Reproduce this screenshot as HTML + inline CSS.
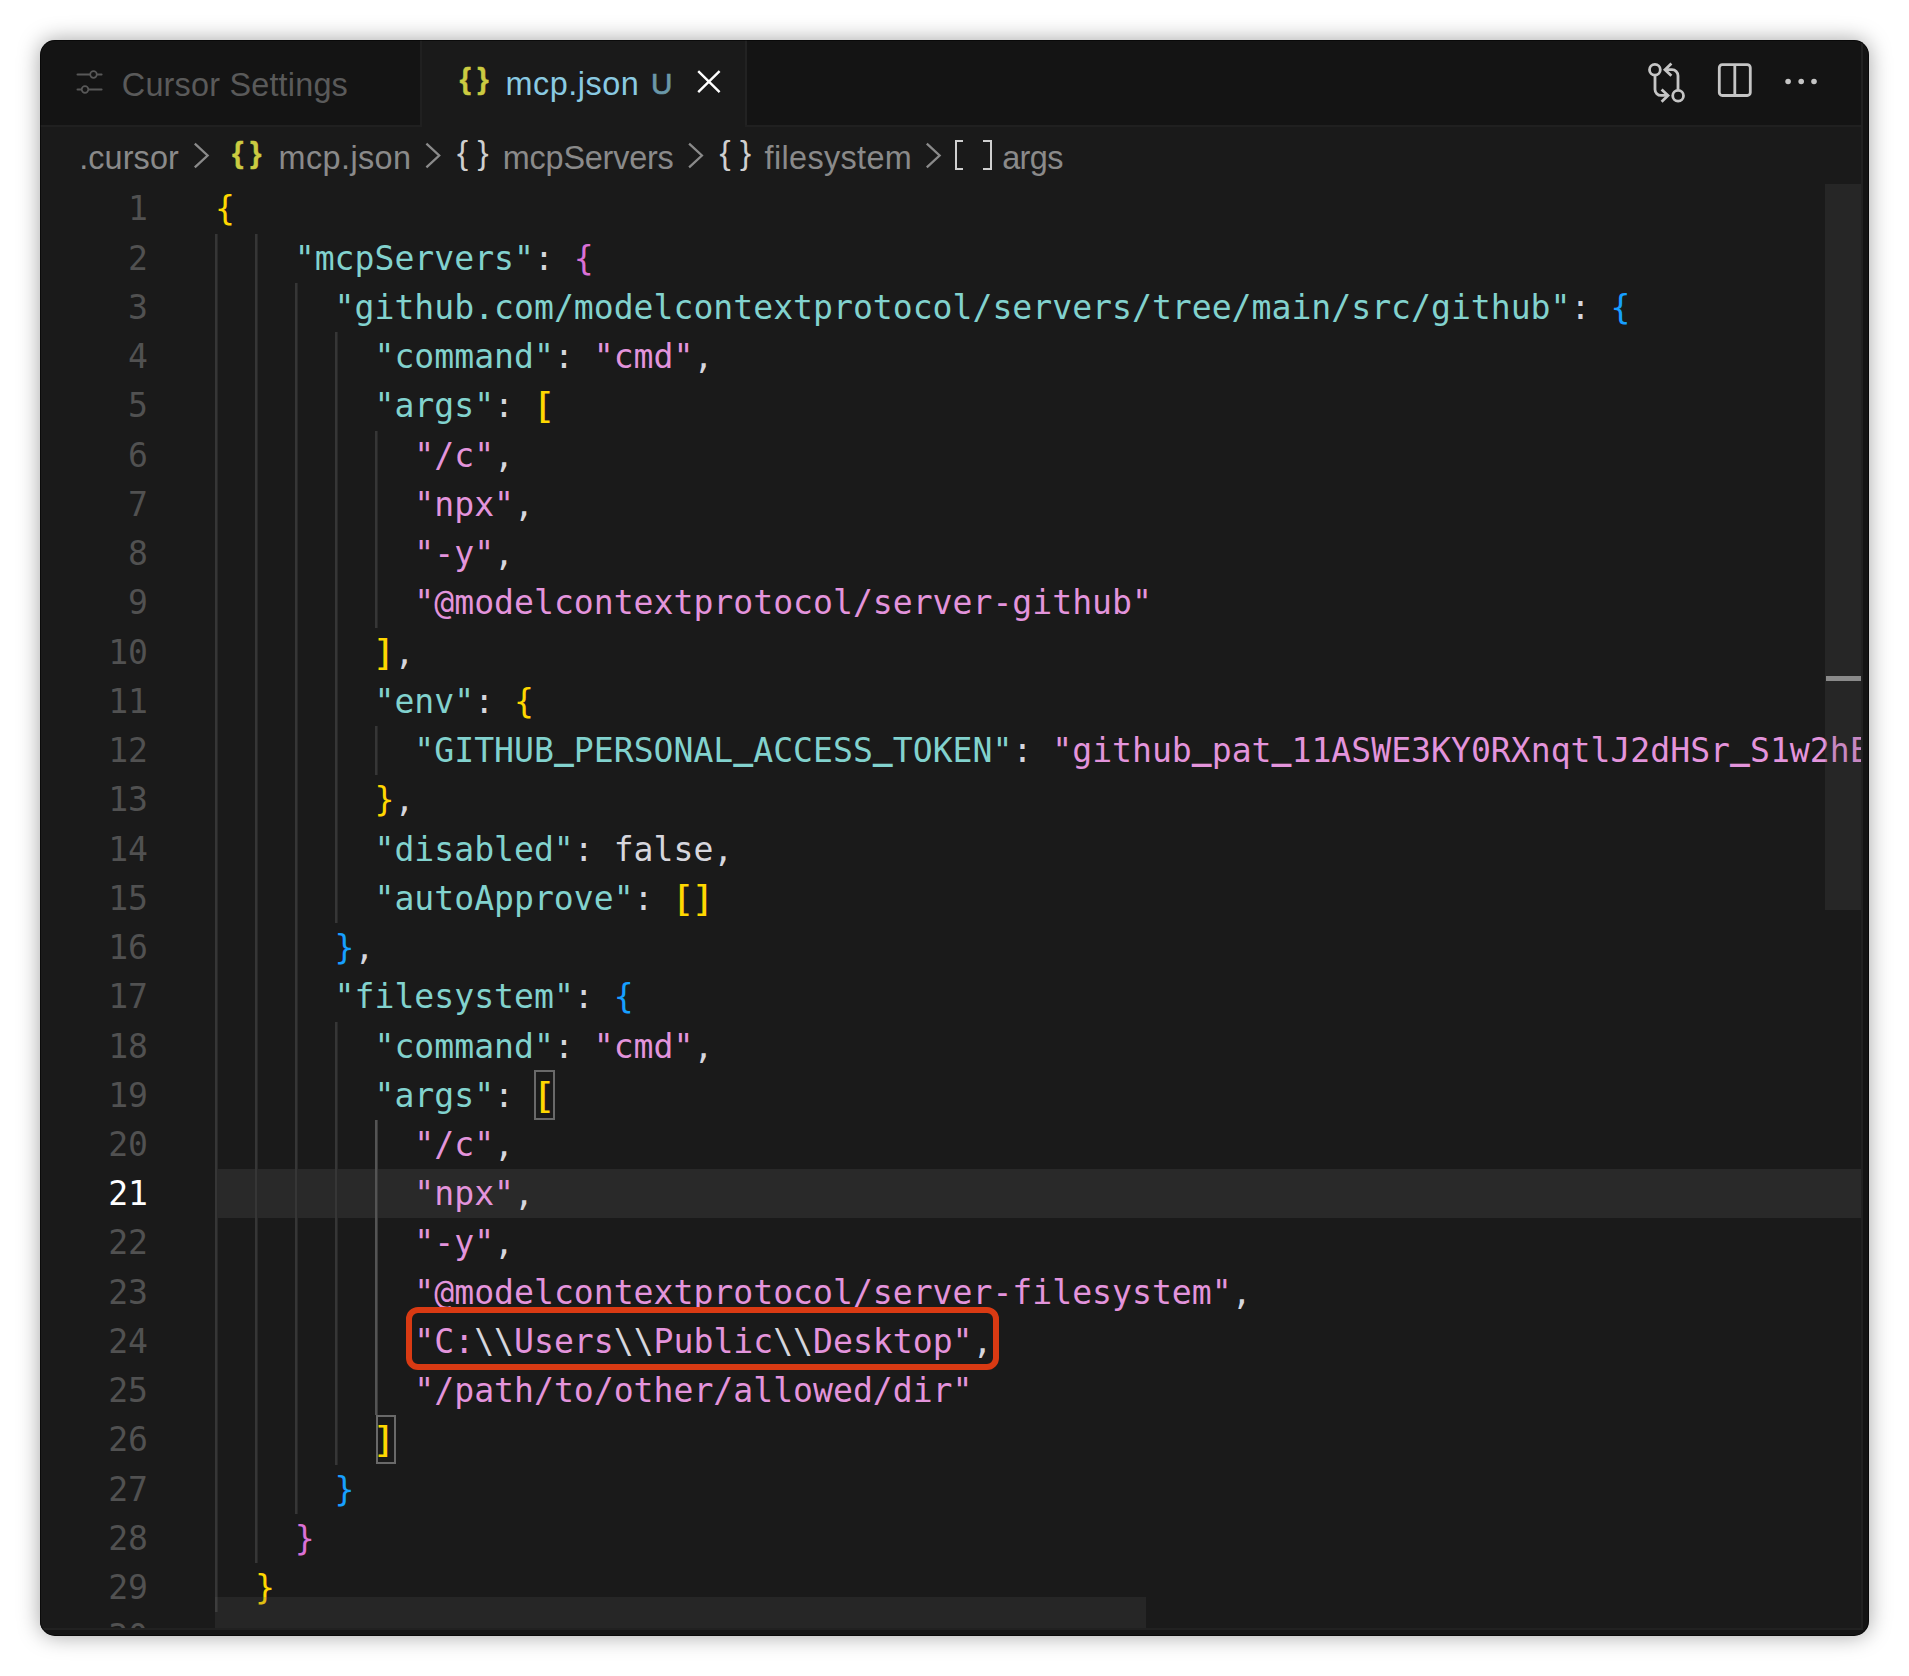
<!DOCTYPE html>
<html lang="en"><head><meta charset="utf-8"><title>mcp.json - Cursor</title>
<style>

html,body{margin:0;padding:0;background:#fff;}
body{width:1909px;height:1676px;position:relative;overflow:hidden;}
.abs{position:absolute;}
#win{position:absolute;left:40px;top:40px;width:1829px;height:1596px;border-radius:15px;background:#141414;
  box-shadow:0 0 22px rgba(0,0,0,.36);overflow:hidden;}
#win:after{content:"";position:absolute;left:0;top:0;right:0;bottom:0;border-radius:15px;box-shadow:inset 0 0 0 1px rgba(0,0,0,.55);pointer-events:none;z-index:50;}
#page{position:absolute;left:-40px;top:-40px;width:1909px;height:1676px;} /* abs page coords inside window */
.ui{font-family:"Liberation Sans",sans-serif;white-space:pre;}
.mono{font-family:"DejaVu Sans Mono","Liberation Mono",monospace;white-space:pre;}

.ln,.cl{position:absolute;height:49.24px;line-height:49.24px;font-size:33.12px;}
.ln{left:60px;width:88px;text-align:right;color:#515151;}
.cl{left:215px;color:#d6d6dd;}
.u{position:relative;top:-3px;font-weight:bold;}
.q{display:inline-block;font-style:normal;transform-origin:50% 6.2px;transform:scale(1.25,1.048);}
.g{position:absolute;width:3px;background:linear-gradient(to right,#363636 0,#363636 2px,#292929 2px);}
.g.a{background:linear-gradient(to right,#545454 0,#545454 2px,#3c3c3c 2px);}
.k{color:#82d2ce}
.s{color:#e394dc}
.p{color:#d6d6dd}
.y{color:#ffd700}
.m{color:#da70d6}
.b{color:#179fff}
</style></head><body>
<div id="win"><div id="page">
<div class="abs" style="left:40px;top:127px;width:1821px;height:1501px;background:#1a1a1a"></div>
<div class="abs" style="left:1861px;top:40px;width:2px;height:1590px;background:#212121"></div>
<div class="abs" style="left:40px;top:1628px;width:1823px;height:2px;background:#212121"></div>
<div class="abs" style="left:40px;top:125px;width:1821px;height:2px;background:#202020"></div>
<div class="abs" style="left:420px;top:40px;width:2px;height:87px;background:#202020"></div>
<div class="abs" style="left:422px;top:40px;width:323px;height:87px;background:#1a1a1a"></div>
<div class="abs" style="left:745px;top:40px;width:2px;height:85px;background:#222222"></div>
<svg class="abs" style="left:0;top:0" width="1909" height="1676" viewBox="0 0 1909 1676" fill="none">
<g stroke="#585858" stroke-width="2" stroke-linecap="round">
<path d="M77.5 74.5H89.6M97.4 74.5H101.6M77.5 89.5H81.1M88.9 89.5H101.6"/>
<circle cx="93.5" cy="74.5" r="3.3" stroke-width="1.7"/><circle cx="85" cy="89.5" r="3.3" stroke-width="1.7"/>
</g>
<path d="M698.2 71.1L719.6 92.2M719.6 71.1L698.2 92.2" stroke="#ffffff" stroke-width="2.4"/>
<g stroke="#c5c5c5" stroke-width="2.8" stroke-linecap="butt" stroke-linejoin="miter">
<circle cx="1654.9" cy="69.7" r="5.4"/><circle cx="1678.1" cy="95.8" r="5.4"/>
<path d="M1655 75.1V89.4a6 6 0 0 0 6 6H1667"/>
<path d="M1661.6 89.4L1668 95.6L1661.6 101.8"/>
<path d="M1678 90.4V75.7a6 6 0 0 0 -6 -6H1666"/>
<path d="M1671.4 63.6L1665 69.7L1671.4 75.8"/>
<rect x="1719.3" y="64.7" width="31" height="30.8" rx="3"/>
<path d="M1734.8 64.7V95.5"/>
</g>
<g fill="#c5c5c5"><circle cx="1788.1" cy="81.5" r="2.8"/><circle cx="1801.2" cy="81.5" r="2.8"/><circle cx="1814" cy="81.5" r="2.8"/></g>
<path d="M194.8 143.6L207.6 155.5L194.8 167.4" stroke="#8a8a8a" stroke-width="2.3"/>
<path d="M426.4 143.6L439.2 155.5L426.4 167.4" stroke="#8a8a8a" stroke-width="2.3"/>
<path d="M689.1 143.6L701.9 155.5L689.1 167.4" stroke="#8a8a8a" stroke-width="2.3"/>
<path d="M926.8 143.6L939.6 155.5L926.8 167.4" stroke="#8a8a8a" stroke-width="2.3"/>
</svg>
<div class="abs ui" style="left:121.8px;top:64.77px;height:40px;line-height:40px;font-size:32.4px;color:#5a5a5a;letter-spacing:0.2px;">Cursor Settings</div>
<div class="abs ui" style="left:459.4px;top:58.8px;height:40px;line-height:40px;font-size:29.57px;color:#cbcb41;font-weight:bold;-webkit-text-stroke:0.35px #cbcb41;">{</div><div class="abs ui" style="left:477.3px;top:58.8px;height:40px;line-height:40px;font-size:29.57px;color:#cbcb41;font-weight:bold;-webkit-text-stroke:0.35px #cbcb41;">}</div>
<div class="abs ui" style="left:505.6px;top:64.37px;height:40px;line-height:40px;font-size:32.4px;color:#8acae2;letter-spacing:0.5px;">mcp.json</div>
<div class="abs ui" style="left:651px;top:63.74px;height:40px;line-height:40px;font-size:29.6px;color:#6a98a9;-webkit-text-stroke:0.7px #6a98a9;">U</div>
<div class="abs ui" style="left:79.2px;top:137.77px;height:40px;line-height:40px;font-size:32.4px;color:#8a8a8a;letter-spacing:0.1px;">.cursor</div>
<div class="abs ui" style="left:232px;top:133.2px;height:40px;line-height:40px;font-size:29.57px;color:#cbcb41;font-weight:bold;-webkit-text-stroke:0.35px #cbcb41;">{</div><div class="abs ui" style="left:249.9px;top:133.2px;height:40px;line-height:40px;font-size:29.57px;color:#cbcb41;font-weight:bold;-webkit-text-stroke:0.35px #cbcb41;">}</div>
<div class="abs ui" style="left:278.6px;top:137.77px;height:40px;line-height:40px;font-size:32.4px;color:#8a8a8a;letter-spacing:0.4px;">mcp.json</div>
<div class="abs ui" style="left:457px;top:132.6px;height:40px;line-height:40px;font-size:33.3px;color:#cfcfcf;">{</div><div class="abs ui" style="left:477.4px;top:132.6px;height:40px;line-height:40px;font-size:33.3px;color:#cfcfcf;">}</div>
<div class="abs ui" style="left:502.8px;top:137.77px;height:40px;line-height:40px;font-size:32.4px;color:#8a8a8a;letter-spacing:-0.2px;">mcpServers</div>
<div class="abs ui" style="left:719.6px;top:132.6px;height:40px;line-height:40px;font-size:33.3px;color:#cfcfcf;">{</div><div class="abs ui" style="left:740px;top:132.6px;height:40px;line-height:40px;font-size:33.3px;color:#cfcfcf;">}</div>
<div class="abs ui" style="left:764.6px;top:137.77px;height:40px;line-height:40px;font-size:32.4px;color:#8a8a8a;letter-spacing:0.35px;">filesystem</div>
<div class="abs" style="left:955.2px;top:139.9px;width:6.3px;height:26.6px;border:2.5px solid #cfcfcf;border-right:none"></div>
<div class="abs" style="left:983.3px;top:139.9px;width:6.3px;height:26.6px;border:2.5px solid #cfcfcf;border-left:none"></div>
<div class="abs ui" style="left:1002.2px;top:137.77px;height:40px;line-height:40px;font-size:32.4px;color:#8a8a8a;letter-spacing:-0.6px;">args</div>
<div class="abs" id="edclip" style="left:40px;top:126px;width:1821px;height:1502px;overflow:hidden"><div class="abs" style="left:-40px;top:-126px;width:1909px;height:1676px">
<div class="abs" style="left:215px;top:1169.25px;width:1646px;height:49.24px;background:#292929"></div>
<div class="g" style="left:215px;top:233.59px;height:1378.86px"></div>
<div class="g" style="left:255px;top:233.59px;height:1329.62px"></div>
<div class="g" style="left:295px;top:282.84px;height:1231.12px"></div>
<div class="g" style="left:335px;top:332.08px;height:590.94px"></div>
<div class="g" style="left:335px;top:1021.51px;height:443.2px"></div>
<div class="g" style="left:375px;top:430.57px;height:196.98px"></div>
<div class="g" style="left:375px;top:726.04px;height:49.24px"></div>
<div class="g a" style="left:375px;top:1120px;height:295.47px"></div>
<div class="abs" style="left:534px;top:1070px;width:21px;height:50px;box-sizing:border-box;border:2px solid #696969;background:#1a1a1a"></div>
<div class="abs" style="left:376px;top:1415px;width:20px;height:49px;box-sizing:border-box;border:2px solid #696969;background:#1a1a1a"></div>
<div class="ln mono" style="top:184.35px">1</div>
<div class="cl mono" style="top:184.35px"><span class="y">{</span></div>
<div class="ln mono" style="top:233.59px">2</div>
<div class="cl mono" style="top:233.59px">    <span class="k">"mcpServers"</span><span class="p">: </span><span class="m">{</span></div>
<div class="ln mono" style="top:282.84px">3</div>
<div class="cl mono" style="top:282.84px">      <span class="k">"github.com/modelcontextprotocol/servers/tree/main/src/github"</span><span class="p">: </span><span class="b">{</span></div>
<div class="ln mono" style="top:332.08px">4</div>
<div class="cl mono" style="top:332.08px">        <span class="k">"command"</span><span class="p">: </span><span class="s">"cmd"</span><span class="p">,</span></div>
<div class="ln mono" style="top:381.33px">5</div>
<div class="cl mono" style="top:381.33px">        <span class="k">"args"</span><span class="p">: </span><span class="y"><i class="q">[</i></span></div>
<div class="ln mono" style="top:430.57px">6</div>
<div class="cl mono" style="top:430.57px">          <span class="s">"/c"</span><span class="p">,</span></div>
<div class="ln mono" style="top:479.82px">7</div>
<div class="cl mono" style="top:479.82px">          <span class="s">"npx"</span><span class="p">,</span></div>
<div class="ln mono" style="top:529.06px">8</div>
<div class="cl mono" style="top:529.06px">          <span class="s">"-y"</span><span class="p">,</span></div>
<div class="ln mono" style="top:578.31px">9</div>
<div class="cl mono" style="top:578.31px">          <span class="s">"@modelcontextprotocol/server-github"</span></div>
<div class="ln mono" style="top:627.55px">10</div>
<div class="cl mono" style="top:627.55px">        <span class="y"><i class="q">]</i></span><span class="p">,</span></div>
<div class="ln mono" style="top:676.8px">11</div>
<div class="cl mono" style="top:676.8px">        <span class="k">"env"</span><span class="p">: </span><span class="y">{</span></div>
<div class="ln mono" style="top:726.04px">12</div>
<div class="cl mono" style="top:726.04px">          <span class="k">"GITHUB<b class="u">_</b>PERSONAL<b class="u">_</b>ACCESS<b class="u">_</b>TOKEN"</span><span class="p">: </span><span class="s">"github<b class="u">_</b>pat<b class="u">_</b>11ASWE3KY0RXnqtlJ2dHSr<b class="u">_</b>S1w2hE</span></div>
<div class="ln mono" style="top:775.29px">13</div>
<div class="cl mono" style="top:775.29px">        <span class="y">}</span><span class="p">,</span></div>
<div class="ln mono" style="top:824.53px">14</div>
<div class="cl mono" style="top:824.53px">        <span class="k">"disabled"</span><span class="p">: false,</span></div>
<div class="ln mono" style="top:873.78px">15</div>
<div class="cl mono" style="top:873.78px">        <span class="k">"autoApprove"</span><span class="p">: </span><span class="y"><i class="q">[</i><i class="q">]</i></span></div>
<div class="ln mono" style="top:923.02px">16</div>
<div class="cl mono" style="top:923.02px">      <span class="b">}</span><span class="p">,</span></div>
<div class="ln mono" style="top:972.27px">17</div>
<div class="cl mono" style="top:972.27px">      <span class="k">"filesystem"</span><span class="p">: </span><span class="b">{</span></div>
<div class="ln mono" style="top:1021.51px">18</div>
<div class="cl mono" style="top:1021.51px">        <span class="k">"command"</span><span class="p">: </span><span class="s">"cmd"</span><span class="p">,</span></div>
<div class="ln mono" style="top:1070.76px">19</div>
<div class="cl mono" style="top:1070.76px">        <span class="k">"args"</span><span class="p">: </span><span class="y"><i class="q">[</i></span></div>
<div class="ln mono" style="top:1120px">20</div>
<div class="cl mono" style="top:1120px">          <span class="s">"/c"</span><span class="p">,</span></div>
<div class="ln mono" style="top:1169.25px;color:#fff">21</div>
<div class="cl mono" style="top:1169.25px">          <span class="s">"npx"</span><span class="p">,</span></div>
<div class="ln mono" style="top:1218.49px">22</div>
<div class="cl mono" style="top:1218.49px">          <span class="s">"-y"</span><span class="p">,</span></div>
<div class="ln mono" style="top:1267.74px">23</div>
<div class="cl mono" style="top:1267.74px">          <span class="s">"@modelcontextprotocol/server-filesystem"</span><span class="p">,</span></div>
<div class="ln mono" style="top:1316.98px">24</div>
<div class="cl mono" style="top:1316.98px">          <span class="s">"C:</span><span class="p">\\</span><span class="s">Users</span><span class="p">\\</span><span class="s">Public</span><span class="p">\\</span><span class="s">Desktop"</span><span class="p">,</span></div>
<div class="ln mono" style="top:1366.23px">25</div>
<div class="cl mono" style="top:1366.23px">          <span class="s">"/path/to/other/allowed/dir"</span></div>
<div class="ln mono" style="top:1415.47px">26</div>
<div class="cl mono" style="top:1415.47px">        <span class="y"><i class="q">]</i></span></div>
<div class="ln mono" style="top:1464.72px">27</div>
<div class="cl mono" style="top:1464.72px">      <span class="b">}</span></div>
<div class="ln mono" style="top:1513.96px">28</div>
<div class="cl mono" style="top:1513.96px">    <span class="m">}</span></div>
<div class="ln mono" style="top:1563.21px">29</div>
<div class="cl mono" style="top:1563.21px">  <span class="y">}</span></div>
<div class="ln mono" style="top:1612.45px">30</div>
<div class="abs" style="left:1825px;top:184px;width:37px;height:726px;background:rgba(90,90,90,.2)"></div>
<div class="abs" style="left:1826px;top:676px;width:35px;height:5px;background:#8a8a8a"></div>
<div class="abs" style="left:215px;top:1597px;width:931px;height:31px;background:rgba(90,90,90,.2)"></div>
</div></div>
<div class="abs" style="left:406.3px;top:1307.3px;width:592.5px;height:63px;box-sizing:border-box;border:6px solid #d93a13;border-radius:12px"></div>
</div></div>
</body></html>
